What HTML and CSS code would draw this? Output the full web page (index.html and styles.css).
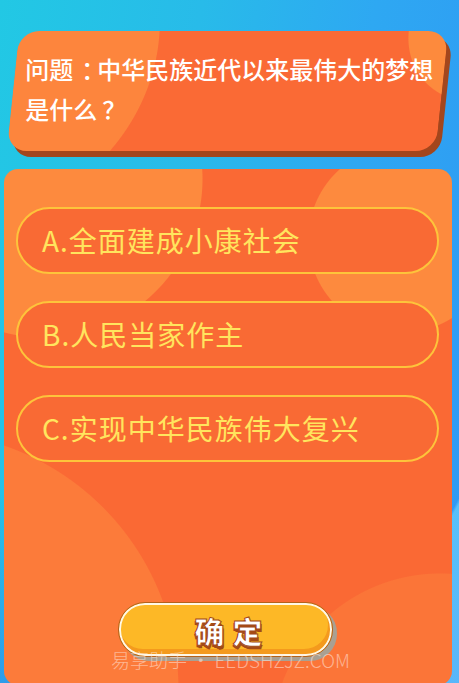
FILE: index.html
```html
<!DOCTYPE html>
<html lang="zh-CN">
<head>
<meta charset="utf-8">
<title>答题</title>
<link rel="stylesheet" href="styles.css">
</head>
<body>
<div class="page">
  <div class="question">
    <div class="q-text">问题<span class="punct">：</span>中华民族近代以来最伟大的梦想是什么<span class="punct punct-q">？</span></div>
  </div>
  <div class="panel">
    <div class="options">
      <div class="option">A.全面建成小康社会</div>
      <div class="option">B.人民当家作主</div>
      <div class="option">C.实现中华民族伟大复兴</div>
    </div>
    <div class="btn-row">
      <div class="confirm"><span class="confirm-text">确定</span></div>
    </div>
  </div>
  <div class="watermark">易享助手 • EEDSHZJZ.COM</div>
</div>
</body>
</html>
```
FILE: styles.css
```css
html, body {
  margin: 0;
  padding: 0;
}
body {
  width: 459px;
  height: 683px;
  overflow: hidden;
  font-family: "Noto Sans CJK SC", "Noto Sans", sans-serif;
  background:
    linear-gradient(118deg, transparent 0%, transparent 88%, rgba(120, 225, 255, 0.55) 88.4%, rgba(120, 225, 255, 0.55) 100%),
    linear-gradient(180deg, transparent 0%, transparent 72%, rgba(60, 90, 240, 0.35) 100%),
    linear-gradient(100deg, #22c8e4 0%, #28bbe9 35%, #2ea8f2 65%, #2f98f4 100%);
}
.page {
  position: relative;
  width: 459px;
  height: 683px;
  padding-top: 31px;
  box-sizing: border-box;
}
.question {
  margin-left: 13px;
  width: 429px;
  height: 120px;
  box-sizing: border-box;
  border-radius: 20px;
  transform: skewX(-6deg);
  background:
    radial-gradient(circle at 460px 0px, #fd8a3d 0, #fd8a3d 70px, transparent 71px),
    radial-gradient(circle at -40px 10px, #fd853d 0, #fd853d 180px, transparent 181px),
    #fa6a35;
  box-shadow: 5px 6px 0 #a3461d;
}
.q-text {
  transform: skewX(6deg);
  padding: 18px 8px 0 11px;
  font-size: 24px;
  font-weight: 500;
  line-height: 40px;
  color: #ffffff;
}
.punct {
  padding-left: 8px;
  margin-right: -8px;
}
.punct-q {
  padding-left: 5px;
  margin-right: -5px;
}
.panel {
  margin: 18px 7px 0 4px;
  height: 516px;
  border-radius: 14px;
  overflow: hidden;
  background:
    radial-gradient(circle at 40px 10px, #fd8a3e 0, #fd8a3e 158px, transparent 159px),
    radial-gradient(circle at 398px 70px, #fd8a3e 0, #fd8a3e 93px, transparent 94px),
    radial-gradient(circle at -84px 521px, #fc7b3a 0, #fc7b3a 258px, transparent 259px),
    radial-gradient(circle at 436px 573px, #fb7538 0, #fb7538 168px, transparent 169px),
    #fa6934;
}
.options {
  display: flex;
  flex-direction: column;
  gap: 27px;
  padding: 38px 13px 0 12px;
}
.option {
  height: 67px;
  box-sizing: border-box;
  border: 2.5px solid #fdc43b;
  border-radius: 34px;
  background: #f96a34;
  color: #ffe55e;
  font-size: 28px;
  letter-spacing: 1px;
  line-height: 62px;
  padding-left: 24px;
  white-space: nowrap;
}
.btn-row {
  padding: 140px 0 0 114px;
}
.confirm {
  width: 215px;
  height: 55px;
  box-sizing: border-box;
  border: 1.5px solid #b4621c;
  border-radius: 27px;
  background: #fdb826;
  box-shadow: inset 0 0 0 2px #fff8e6, inset -2px -5px 0 2px #f49a1d, 4px 4px 0 #a9a092;
  display: flex;
  align-items: center;
  justify-content: center;
  padding-left: 14px;
}
.confirm-text {
  font-size: 30px;
  font-weight: 900;
  letter-spacing: 8px;
  color: #ffffff;
  line-height: 34px;
  -webkit-text-stroke: 1px #a44a16;
  text-shadow: 0 2px 0 #a44a16, 1px 3px 0 #a44a16, -1px 2px 0 #a44a16;
}
.watermark {
  position: absolute;
  left: 111px;
  top: 649px;
  font-family: "Noto Sans CJK SC", "Noto Sans", sans-serif;
  font-size: 19px;
  font-weight: 300;
  line-height: 22px;
  color: rgba(255, 235, 225, 0.55);
  white-space: nowrap;
}
```
